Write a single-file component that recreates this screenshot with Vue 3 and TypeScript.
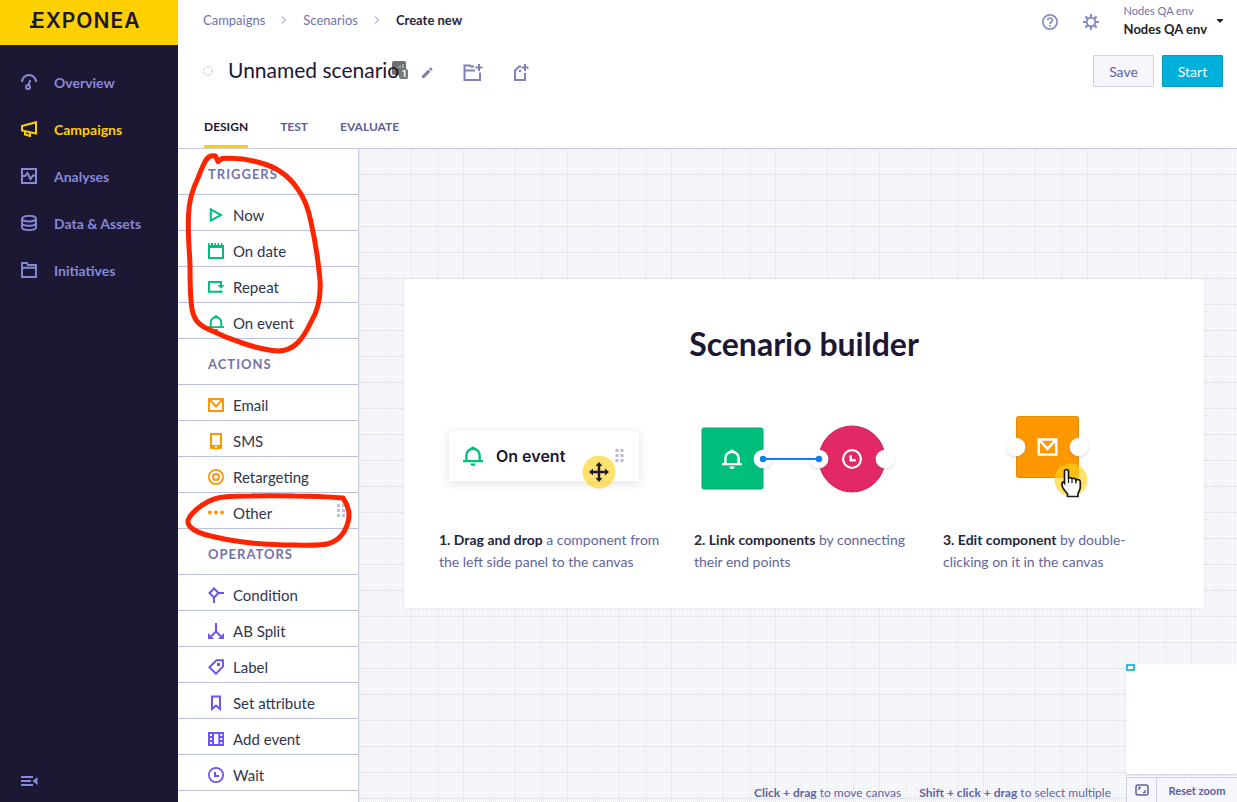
<script setup lang="ts">
interface Item {
  label: string
  icon: string
  handle?: boolean
}
interface Section {
  title: string
  tone: string
  items: Item[]
}

const nav: Item[] = [
  { label: 'Overview', icon: 'gauge' },
  { label: 'Campaigns', icon: 'megaphone' },
  { label: 'Analyses', icon: 'chart' },
  { label: 'Data & Assets', icon: 'database' },
  { label: 'Initiatives', icon: 'folder' },
]

const sections: Section[] = [
  {
    title: 'TRIGGERS',
    tone: 'green',
    items: [
      { label: 'Now', icon: 'play' },
      { label: 'On date', icon: 'calendar' },
      { label: 'Repeat', icon: 'repeat' },
      { label: 'On event', icon: 'bell' },
    ],
  },
  {
    title: 'ACTIONS',
    tone: 'orange',
    items: [
      { label: 'Email', icon: 'mail' },
      { label: 'SMS', icon: 'phone' },
      { label: 'Retargeting', icon: 'target' },
      { label: 'Other', icon: 'dots', handle: true },
    ],
  },
  {
    title: 'OPERATORS',
    tone: 'violet',
    items: [
      { label: 'Condition', icon: 'condition' },
      { label: 'AB Split', icon: 'split' },
      { label: 'Label', icon: 'tag' },
      { label: 'Set attribute', icon: 'bookmark' },
      { label: 'Add event', icon: 'film' },
      { label: 'Wait', icon: 'clock' },
    ],
  },
]

const tabs: string[] = ['DESIGN', 'TEST', 'EVALUATE']
</script>

<template>
  <div class="app">
    <svg class="sprite" aria-hidden="true">
      <defs>
        <symbol id="gauge" viewBox="0 0 16 16">
          <path d="M1 8a7 7 0 0 1 14 0" fill="none" stroke="currentColor" stroke-width="2" />
          <circle cx="7" cy="13" r="2" fill="none" stroke="currentColor" stroke-width="2" />
          <path d="M7.600 11 9.200 6" stroke="currentColor" stroke-width="2" />
        </symbol>
        <symbol id="megaphone" viewBox="0 0 16 16">
          <path d="M1 5 15 1.200V12.400L1 9.500ZM4 10.500V13.500L9 15V12" fill="none" stroke="currentColor" stroke-width="2" />
        </symbol>
        <symbol id="chart" viewBox="0 0 16 16">
          <path d="M1 1H15V15H1ZM1 8H4L6.500 5 9.500 11 12 7.500H15" fill="none" stroke="currentColor" stroke-width="2" />
        </symbol>
        <symbol id="database" viewBox="0 0 16 16">
          <ellipse cx="8" cy="3.700" rx="7" ry="2.800" fill="none" stroke="currentColor" stroke-width="1.900" />
          <path d="M1 3.700V12.300C1 16 15 16 15 12.300V3.700M1 8C1 11.700 15 11.700 15 8" fill="none" stroke="currentColor" stroke-width="1.900" />
        </symbol>
        <symbol id="folder" viewBox="0 0 16 16">
          <path d="M1 15V1H6L7 3H15V15ZM1 5.700H15" fill="none" stroke="currentColor" stroke-width="1.900" />
        </symbol>
        <symbol id="play" viewBox="0 0 16 16">
          <path d="M2.800 2.400 13 8 2.800 13.600Z" fill="none" stroke="currentColor" stroke-width="2" />
        </symbol>
        <symbol id="calendar" viewBox="0 0 16 16">
          <path d="M1 3.500V15H15V3.500" fill="none" stroke="currentColor" stroke-width="2" />
          <path d="M0 0H1.500V2H3V0H5V2H6.500V0H8V2H9.500V0H11V2H13V0H14.500V2H16V5H0Z" fill="currentColor" />
        </symbol>
        <symbol id="repeat" viewBox="0 0 16 16">
          <path d="M12.500 12.700H1V3H13V7" fill="none" stroke="currentColor" stroke-width="2" />
          <path d="M9.500 6H16.500L13 9.800ZM12 11.500H14.500V13.700H12Z" fill="currentColor" />
        </symbol>
        <symbol id="bell" viewBox="0 0 16 16">
          <path d="M2.700 12V7.500a5.300 5.300 0 0 1 10.600 0V12" fill="none" stroke="currentColor" stroke-width="1.900" />
          <path d="M0 11.200H16V13H0ZM5.800 13.900H10.200C10 16.600 6 16.600 5.800 13.900ZM6 2.500C6 -.4 10 -.4 10 2.500Z" fill="currentColor" />
        </symbol>
        <symbol id="mail" viewBox="0 0 16 16">
          <path d="M1 2H15V14H1ZM2 3 8 9.500 14 3" fill="none" stroke="currentColor" stroke-width="2" />
        </symbol>
        <symbol id="phone" viewBox="0 0 16 16">
          <path d="M3 1H13V15H3Z" fill="none" stroke="currentColor" stroke-width="2" />
          <path d="M2.500 12H13.500V15.500H2.500Z" fill="currentColor" />
          <path d="M7 13H9V14.500H7Z" fill="#fff" />
        </symbol>
        <symbol id="target" viewBox="0 0 16 16">
          <circle cx="8" cy="8" r="7.100" fill="none" stroke="currentColor" stroke-width="1.800" />
          <circle cx="8" cy="8" r="3" fill="none" stroke="currentColor" stroke-width="1.900" />
        </symbol>
        <symbol id="dots" viewBox="0 0 16 16">
          <circle cx="1.900" cy="7.500" r="1.900" fill="currentColor" />
          <circle cx="8" cy="7.500" r="1.900" fill="currentColor" />
          <circle cx="14.100" cy="7.500" r="1.900" fill="currentColor" />
        </symbol>
        <symbol id="condition" viewBox="0 0 16 16">
          <path d="M6 1.500 10.500 6 6 10.500 1.500 6ZM10.500 6H16M6 10.500V16" fill="none" stroke="currentColor" stroke-width="2" />
        </symbol>
        <symbol id="split" viewBox="0 0 16 16">
          <path d="M8 0V8.500L3 13.500M8 8.500 13 13.500" fill="none" stroke="currentColor" stroke-width="2" />
          <path d="M0 10V16H6ZM16 10V16H10Z" fill="currentColor" />
        </symbol>
        <symbol id="tag" viewBox="0 0 16 16">
          <path d="M8.500 1.200H15V7.500L8 14.700 1.300 8.300Z" fill="none" stroke="currentColor" stroke-width="1.900" />
          <path d="M9 4H12V7H9Z" fill="currentColor" />
        </symbol>
        <symbol id="bookmark" viewBox="0 0 16 16">
          <path d="M4 1.500H12V14L8 10.500 4 14Z" fill="none" stroke="currentColor" stroke-width="2" />
        </symbol>
        <symbol id="film" viewBox="0 0 16 16">
          <path fill-rule="evenodd" d="M0 1H16V15H0ZM6 3V13H10.300V3ZM2 3V5H4V3ZM2 7V9H4V7ZM2 11V13H4V11ZM12.300 3V5H14.300V3ZM12.300 7V9H14.300V7ZM12.300 11V13H14.300V11Z" fill="currentColor" />
        </symbol>
        <symbol id="clock" viewBox="0 0 16 16">
          <circle cx="8" cy="8" r="7.100" fill="none" stroke="currentColor" stroke-width="1.800" />
          <path d="M7 5V9H11" fill="none" stroke="currentColor" stroke-width="2" />
        </symbol>
        <symbol id="help" viewBox="0 0 16 16">
          <circle cx="8" cy="8" r="7.100" fill="none" stroke="currentColor" stroke-width="1.800" />
          <path d="M5.700 6.300C5.700 3.200 10.300 3.200 10.300 6.300 10.300 8 8 8 8 10" fill="none" stroke="currentColor" stroke-width="1.700" />
          <path d="M7.100 11H8.900V12.700H7.100Z" fill="currentColor" />
        </symbol>
        <symbol id="gear" viewBox="0 0 16 16">
          <circle cx="8" cy="8" r="4.300" fill="none" stroke="currentColor" stroke-width="2" />
          <path d="M8 0V3.500M8 12.500V16M0 8H3.500M12.500 8H16M2.400 2.400 4.900 4.900M11.100 11.100 13.600 13.600M13.600 2.400 11.100 4.900M4.900 11.100 2.400 13.600" stroke="currentColor" stroke-width="2.200" />
        </symbol>
        <symbol id="collapse" viewBox="0 0 17 12">
          <path d="M0 2H12M0 6H10M0 10H12" stroke="currentColor" stroke-width="2" />
          <path d="M11.500 6 16.500 2V10Z" fill="currentColor" />
        </symbol>
        <symbol id="pencil" viewBox="0 0 12 12">
          <path d="M1 11V8.700L7.200 2.500 9.500 4.800 3.300 11ZM8 1.800 9 .8C9.400 .4 9.900 .4 10.300 .8L11.200 1.700C11.600 2.100 11.600 2.600 11.200 3L10.200 4Z" fill="currentColor" />
        </symbol>
        <symbol id="folder-plus" viewBox="0 0 20 18">
          <path d="M11 2.500H8L7 1.500H1.500V16H17V8.500M1.500 6.500H12" fill="none" stroke="currentColor" stroke-width="2" />
          <path d="M16 0V7M12.500 3.500H19.500" stroke="currentColor" stroke-width="2" />
        </symbol>
        <symbol id="tag-plus" viewBox="0 0 16 18">
          <path d="M8 2.500H6L2 6.500V16H12V9" fill="none" stroke="currentColor" stroke-width="2" />
          <path d="M12 0V7M8.500 3.500H15.500" stroke="currentColor" stroke-width="2" />
          <circle cx="7" cy="7" r="1.300" fill="currentColor" />
        </symbol>
        <symbol id="grip" viewBox="0 0 8 14">
          <path d="M0 0H3V3H0ZM5 0H8V3H5ZM0 5H3V8H0ZM5 5H8V8H5ZM0 10H3V13H0ZM5 10H8V13H5Z" fill="currentColor" />
        </symbol>
        <symbol id="fit" viewBox="0 0 14 12">
          <rect x="1" y="1" width="12" height="10" rx="2" fill="none" stroke="currentColor" stroke-width="1.500" />
          <path d="M4 6V3.500H6M10 6V8.500H8" fill="none" stroke="currentColor" stroke-width="1.300" />
        </symbol>
        <filter id="soft" x="-50%" y="-50%" width="200%" height="200%">
          <feDropShadow dx="0" dy="1" stdDeviation="1" flood-color="#5a5aa0" flood-opacity=".3" />
        </filter>
        <pattern id="dots-small" width="2" height="2" patternUnits="userSpaceOnUse">
          <path d="M0 0H1V1H0Z" fill="#e6ebf3" />
        </pattern>
        <pattern id="lines" width="26" height="26" patternUnits="userSpaceOnUse">
          <path d="M0 25.500H26M.5 0V26" stroke="#e3e8f1" stroke-width="1" />
        </pattern>
      </defs>
    </svg>

    <aside class="sidebar">
      <a class="brand" href="#" aria-label="Exponea home">
        <svg width="112" height="20" viewBox="0 0 112 20">
          <text x="2" y="17" class="wordmark">EXPONEA</text>
          <path d="M0 15.800H6M2 11H6" stroke="#1c1732" stroke-width="2.400" />
        </svg>
      </a>
      <nav class="nav">
        <a v-for="item in nav" :key="item.label" href="#" class="nav-link" :class="{ active: item.label === 'Campaigns' }">
          <svg class="icon"><use :href="'#' + item.icon" /></svg>
          <span>{{ item.label }}</span>
        </a>
      </nav>
      <button class="plain collapse" type="button" aria-label="Collapse menu">
        <svg width="17" height="12"><use href="#collapse" /></svg>
      </button>
    </aside>

    <main class="main">
      <header class="topbar">
        <nav class="crumbs" aria-label="Breadcrumb">
          <a href="#">Campaigns</a>
          <svg width="6" height="8" viewBox="0 0 6 8"><path d="M1 .5 4.500 4 1 7.500" /></svg>
          <a href="#">Scenarios</a>
          <svg width="6" height="8" viewBox="0 0 6 8"><path d="M1 .5 4.500 4 1 7.500" /></svg>
          <strong>Create new</strong>
        </nav>
        <div class="tools">
          <button class="plain" type="button" aria-label="Help"><svg class="icon"><use href="#help" /></svg></button>
          <button class="plain" type="button" aria-label="Settings"><svg class="icon"><use href="#gear" /></svg></button>
          <button class="plain account" type="button">
            <span class="account-names"><small>Nodes QA env</small><span>Nodes QA env</span></span>
            <svg width="6" height="4" viewBox="0 0 6 4"><path d="M0 0H6V1L3 4 0 1Z" fill="#222" /></svg>
          </button>
        </div>
      </header>

      <div class="titlebar">
        <svg class="status" width="10" height="10" viewBox="0 0 10 10"><circle cx="5" cy="5" r="4.300" /></svg>
        <div class="title-box">
          <svg class="badge" width="16" height="18" viewBox="0 0 16 18">
            <rect width="14" height="14" rx="2" fill="#6e6e6e" />
            <path d="M5 7V6M8 7V4.500M11 7V3" stroke="#ddd" stroke-width="1" />
            <rect x="7" y="8" width="9" height="10" rx="2" fill="#777" />
            <text x="10" y="16" class="badge-text">1</text>
          </svg>
          <h1>Unnamed scenario</h1>
        </div>
        <div class="title-tools">
          <button class="plain" type="button" aria-label="Rename"><svg width="12" height="12"><use href="#pencil" /></svg></button>
          <button class="plain" type="button" aria-label="Add to folder"><svg width="20" height="18"><use href="#folder-plus" /></svg></button>
          <button class="plain" type="button" aria-label="Add tag"><svg width="16" height="18"><use href="#tag-plus" /></svg></button>
        </div>
        <div class="buttons">
          <button class="btn" type="button">Save</button>
          <button class="btn primary" type="button">Start</button>
        </div>
      </div>

      <nav class="tabs">
        <a v-for="tab in tabs" :key="tab" href="#" :class="{ current: tab === 'DESIGN' }">{{ tab }}</a>
      </nav>

      <div class="workspace">
        <section class="panel">
          <div v-for="section in sections" :key="section.title" :class="section.tone">
            <h2>{{ section.title }}</h2>
            <ul>
              <li v-for="item in section.items" :key="item.label">
                <svg class="icon"><use :href="'#' + item.icon" /></svg>
                <span>{{ item.label }}</span>
                <svg v-if="item.handle" class="grip" width="8" height="14"><use href="#grip" /></svg>
              </li>
            </ul>
          </div>
        </section>

        <section class="canvas">
          <svg class="grid-bg" width="100%" height="100%" aria-hidden="true">
            <rect width="100%" height="100%" fill="url(#dots-small)" />
            <rect width="100%" height="100%" fill="url(#lines)" />
          </svg>
          <article class="intro">
            <h2>Scenario builder</h2>
            <div class="steps">
              <div class="step">
                <div class="art chip-art">
                  <div class="chip">
                    <svg class="chip-bell"><use href="#bell" /></svg>
                    <span>On event</span>
                    <svg class="chip-grip" width="9" height="14"><use href="#grip" /></svg>
                    <svg class="move" width="34" height="34" viewBox="0 0 34 34">
                      <circle cx="17" cy="17" r="16.500" fill="#ffd21f" fill-opacity=".65" />
                      <path d="M17 9V25M9 17H25" stroke="#1c1732" stroke-width="2.400" />
                      <path d="M17 7 20.500 11H13.500ZM17 27 20.500 23H13.500ZM7 17 11 13.500V20.500ZM27 17 23 13.500V20.500Z" fill="#1c1732" />
                    </svg>
                  </div>
                </div>
                <p><strong>1. Drag and drop</strong> a component from<br />the left side panel to the canvas</p>
              </div>
              <div class="step">
                <div class="art link-art">
                  <svg width="200" height="90" viewBox="0 0 200 90">
                    <rect x="1" y="18" width="61" height="61" rx="2" fill="#00bf7c" stroke="#00a96c" />
                    <circle cx="151" cy="49" r="33" fill="#e22865" stroke="#cc2059" />
                    <g fill="#fff" filter="url(#soft)">
                      <circle cx="62" cy="49" r="9.300" /><circle cx="118" cy="49" r="9.300" /><circle cx="184" cy="49" r="9.300" />
                    </g>
                    <path d="M62 49H118" stroke="#0a80f5" stroke-width="2.200" />
                    <circle cx="62" cy="49" r="3.200" fill="#0a80f5" /><circle cx="118" cy="49" r="3.200" fill="#0a80f5" />
                    <use href="#bell" x="21" y="39" width="20" height="20" color="#fff" />
                    <use href="#clock" x="141" y="39" width="20" height="20" color="#fff" />
                  </svg>
                </div>
                <p><strong>2. Link components</strong> by connecting<br />their end points</p>
              </div>
              <div class="step">
                <div class="art edit-art">
                  <svg width="86" height="100" viewBox="0 0 86 100">
                    <rect x="10.500" y="6.500" width="62" height="61" rx="2" fill="#ff9800" stroke="#e88a00" />
                    <g fill="#fff" filter="url(#soft)">
                      <circle cx="10" cy="37" r="9.300" /><circle cx="73" cy="37" r="9.300" />
                    </g>
                    <use href="#mail" x="31" y="27" width="21" height="20" color="#fff" />
                    <circle cx="65" cy="70" r="16.500" fill="#ffd21f" fill-opacity=".65" />
                    <path
                      d="M58.500 73V61.500C58.500 58.800 62.500 58.800 62.500 61.500V69C62.500 67 66 67 66 69.500 66.500 67.500 70 68 70 70.300 71 68.800 74.300 69.500 74.300 72V77C74.300 80 72.500 81.500 72 84V86.500H61.500V84C60 81.500 56 78.500 56 75V73.500C56 72 57.500 71.600 58.500 73Z"
                      fill="#fff"
                      stroke="#1a1a1a"
                      stroke-width="1.700"
                    />
                    <path d="M66 69.500V73M70 70.300V73.500M62.500 69V73" stroke="#1a1a1a" stroke-width="1.200" />
                  </svg>
                </div>
                <p><strong>3. Edit component</strong> by double-<br />clicking on it in the canvas</p>
              </div>
            </div>
          </article>
          <div class="hints">
            <span><b>Click + drag</b> to move canvas</span>
            <span><b>Shift + click + drag</b> to select multiple</span>
          </div>
          <div class="corner">
            <div class="minimap"><i></i></div>
            <div class="zoombar">
              <button type="button" aria-label="Fit to screen"><svg width="14" height="12"><use href="#fit" /></svg></button>
              <button type="button">Reset zoom</button>
            </div>
          </div>
        </section>
      </div>
    </main>

    <svg class="marks" width="360" height="560" viewBox="0 0 360 560" aria-hidden="true">
      <path d="M215 156C211 155 208 157 206 160C202 167 200 173 198 178C192 190 189 200 188.500 215C187.500 235 189.500 250 190 265C190 285 190.500 300 192 309C194 320 199 325 208 329C230 340 260 350 278 351C294 351 303 339 311 322C319 309 321 296 320 280C318 258 315 240 311 222C308 207 304 197 297 188C288 175 276 167 261 163C245 158 230 158 222 158.500L218 161.500 215.500 156" />
      <path d="M343 498C330 497 310 496 295 496C275 495.500 262 495.500 251 496C237 496 226 496 218 498C208 500 202 505 197 509C190 515 187 519 188 523C190 530 203 535 215 537C240 543 270 545 295 545C310 545.500 322 545.500 329 543.500C340 540 346 531 348.500 520C350 512 348 505 343 498Z" />
    </svg>
  </div>
</template>

<style>
body {
  margin: 0;
}
</style>

<style scoped>
* {
  box-sizing: border-box;
}
.app {
  position: relative;
  display: flex;
  min-height: 100vh;
  font-family: Lato, 'Open Sans', sans-serif;
  color: #1c1732;
  background: #fff;
}
a {
  color: inherit;
  text-decoration: none;
}
h1,
h2,
p,
ul {
  margin: 0;
  padding: 0;
}
svg {
  display: block;
  flex: none;
  overflow: visible;
}
.sprite {
  position: absolute;
  width: 0;
  height: 0;
}
.icon {
  width: 16px;
  height: 16px;
}
.plain {
  padding: 0;
  border: 0;
  background: none;
  color: inherit;
  font: inherit;
  cursor: pointer;
}

.sidebar {
  display: flex;
  flex: 0 0 178px;
  flex-direction: column;
  background: #1c1732;
  color: #8688da;
}
.brand {
  display: flex;
  align-items: center;
  height: 45px;
  padding: 0 0 4px 30px;
  background: #ffd000;
}
.wordmark {
  font: 600 21px Inter, sans-serif;
  letter-spacing: 1px;
  fill: #1c1732;
}
.nav {
  padding-top: 13px;
}
.nav-link {
  display: flex;
  align-items: center;
  gap: 17px;
  height: 47px;
  padding-left: 21px;
  font-size: 14px;
  font-weight: 700;
}
.nav-link span {
  padding-top: 2px;
}
.nav-link.active {
  color: #ffd000;
}
.collapse {
  margin: auto 0 15px 21px;
  align-self: flex-start;
}

.main {
  display: flex;
  flex: 1;
  min-width: 0;
  flex-direction: column;
}
.topbar {
  display: flex;
  justify-content: space-between;
  height: 44px;
  padding: 0 14px 0 25px;
}
.crumbs {
  display: flex;
  align-items: center;
  gap: 16px;
  height: 40px;
  font-size: 13px;
  color: #7072b0;
}
.crumbs svg {
  fill: none;
  stroke: #8183bd;
}
.crumbs strong {
  color: #24263e;
}
.tools {
  display: flex;
  align-items: center;
  gap: 25px;
  color: #8a8cc4;
}
.account {
  display: flex;
  align-items: center;
  gap: 10px;
  height: 42px;
  margin-bottom: 2px;
  text-align: left;
}
.account-names {
  display: flex;
  flex-direction: column;
  font-size: 13px;
  font-weight: 700;
  line-height: 20px;
  color: #222;
}
.account-names small {
  font-size: 11px;
  font-weight: 400;
  line-height: 16px;
  color: #7072b0;
}

.titlebar {
  display: flex;
  align-items: center;
  height: 54px;
  padding: 0 14px 0 25px;
  color: #7f81b8;
}
.status {
  fill: none;
  stroke: #a9acd8;
  stroke-dasharray: 1.500 1.200;
}
.title-box {
  position: relative;
  padding-left: 15px;
}
h1 {
  position: relative;
  padding-bottom: 2px;
  font-size: 21px;
  font-weight: 400;
  line-height: 26px;
  white-space: nowrap;
  color: #1c1732;
}
.badge {
  position: absolute;
  top: 4px;
  right: -9px;
}
.badge-text {
  font: 700 9px Inter, sans-serif;
  fill: #fff;
}
.title-tools {
  display: flex;
  align-items: center;
  gap: 30px;
  padding: 4px 0 0 22px;
}
.buttons {
  display: flex;
  gap: 8px;
  margin-left: auto;
}
.btn {
  width: 61px;
  height: 32px;
  padding: 0;
  border: 1px solid #cdd0e8;
  border-radius: 1px;
  background: #f7f6fd;
  color: #62649c;
  font: 14px Lato, sans-serif;
}
.btn.primary {
  border-color: #009dc0;
  background: #00b0da;
  color: #fff;
}

.tabs {
  display: flex;
  gap: 32px;
  height: 51px;
  padding-left: 26px;
  border-bottom: 1px solid #c5c9e4;
  font-size: 12px;
  font-weight: 700;
  line-height: 18px;
  color: #5e609c;
}
.tabs a {
  padding-top: 20px;
  border-bottom: 3px solid transparent;
}
.tabs .current {
  color: #1c1732;
  border-color: #ffd000;
}

.workspace {
  display: flex;
  flex: 1;
}
.panel {
  flex: 0 0 181px;
  border-right: 1px solid #c9d0e8;
}
.panel h2 {
  height: 46px;
  padding: 6px 0 0 30px;
  border-bottom: 1px solid #bcc0de;
  font-size: 13px;
  font-weight: 700;
  line-height: 38px;
  letter-spacing: 1px;
  color: #7173ad;
}
.panel ul {
  list-style: none;
}
.panel li {
  display: flex;
  align-items: center;
  gap: 9px;
  height: 36px;
  padding: 5px 13px 0 30px;
  border-bottom: 1px solid #bcc0de;
  font-size: 15px;
}
.panel li span {
  color: #32354c;
}
.green .icon {
  color: #00bf7c;
}
.orange .icon {
  color: #ff9800;
}
.violet .icon {
  color: #6c55ee;
}
.panel .grip {
  margin: 0 0 4px auto;
  color: #bcc0e2;
}

.canvas {
  position: relative;
  flex: 1;
  min-width: 0;
  padding: 130px 33px 0 45px;
  background: #f9fafe;
}
.grid-bg {
  position: absolute;
  inset: 0;
}
.intro {
  position: relative;
  padding: 45px 0 35px 35px;
  background: #fff;
  box-shadow: 0 0 2px #d3d8e6;
}
.intro h2 {
  padding-right: 35px;
  font-size: 32px;
  font-weight: 700;
  line-height: 40px;
  text-align: center;
}
.steps {
  display: grid;
  grid-template-columns: 255fr 249fr 261fr;
  padding-top: 46px;
}
.art {
  height: 119px;
}
.chip-art {
  padding: 21px 0 0 10px;
}
.chip {
  position: relative;
  display: flex;
  align-items: center;
  width: 190px;
  height: 50px;
  padding: 0 15px 0 14px;
  background: #fff;
  box-shadow: 0 2px 10px rgba(30, 30, 50, 0.14);
  font: 600 16px Inter, sans-serif;
}
.chip-bell {
  width: 20px;
  height: 20px;
  margin-right: 13px;
  color: #00bf7c;
}
.chip-grip {
  margin-left: auto;
  color: #b7b8da;
}
.move {
  position: absolute;
  top: 24px;
  left: 133px;
}
.link-art {
  padding-left: 7px;
}
.edit-art {
  padding-left: 63px;
}
.step p {
  font-size: 14px;
  line-height: 22px;
  white-space: nowrap;
  color: #62649c;
}
.step strong {
  color: #24263e;
}
.hints {
  position: absolute;
  right: 126px;
  bottom: 0;
  display: flex;
  gap: 18px;
  font-size: 12px;
  line-height: 18px;
  color: #62649c;
}
.corner {
  position: absolute;
  right: 0;
  bottom: 0;
  width: 111px;
}
.minimap {
  height: 110px;
  margin-bottom: 3px;
  border-radius: 2px;
  background: rgba(255, 255, 255, 0.92);
  box-shadow: 0 1px 2px #c9cde0;
}
.minimap i {
  display: block;
  width: 9px;
  height: 7px;
  border: 2px solid #2fbde0;
}
.zoombar {
  display: flex;
  height: 25px;
  border: 1px solid #cdd0e8;
  border-width: 1px 0 0 1px;
  background: #f7f6fd;
}
.zoombar button {
  display: flex;
  align-items: center;
  justify-content: center;
  flex: 1;
  padding: 0;
  border: 0;
  background: none;
  color: #5e609c;
  font: 700 11px Lato, sans-serif;
}
.zoombar button:first-child {
  flex: 0 0 30px;
  border-right: 1px solid #cdd0e8;
}
.marks {
  position: absolute;
  top: 0;
  left: 0;
  pointer-events: none;
  fill: none;
  stroke: #ff2400;
  stroke-width: 5px;
  stroke-linecap: round;
  stroke-linejoin: round;
}
</style>
